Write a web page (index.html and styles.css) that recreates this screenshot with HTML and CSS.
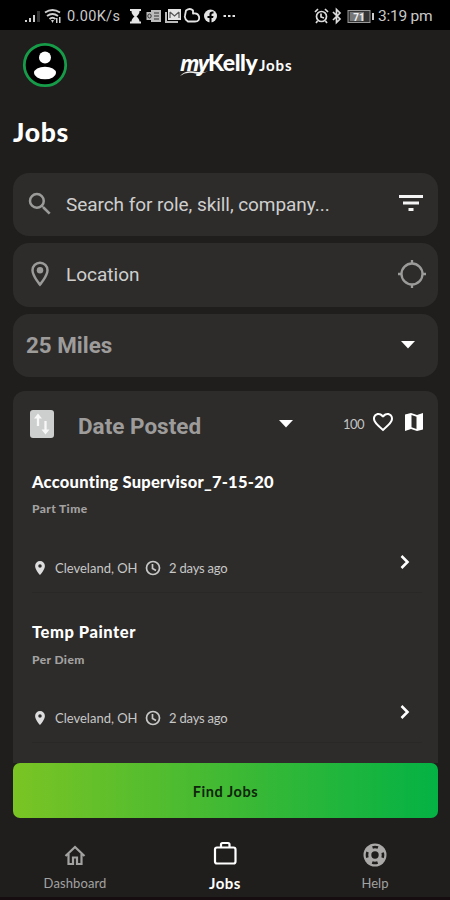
FILE: index.html
```html
<!DOCTYPE html>
<html lang="en">
<head>
<meta charset="utf-8">
<title>myKelly Jobs</title>
<link rel="stylesheet" href="styles.css">
</head>
<body>
<div class="app">
  <div class="status">
    <svg class="signal" width="38" height="18" viewBox="0 0 38 18" fill="#d0d0d0">
      <path d="M0 13h2v2H0zM4 11h2v4H4zM8 8h2v7H8z"/><path d="M12 4h3v11h-3z" fill="#333"/>
      <g fill="none" stroke="#d0d0d0" stroke-width="1.9"><path d="M20 5.500q7.500-5 15 0M22 9q5.500-4 11 0M24.500 12q3-2.500 6 0"/></g>
      <path d="M26 13h3l-1.500 3zM31 11h1.500v5H31zM34 10h1.500v6H34z"/>
    </svg>
    <span class="speed">0.00K/s</span>
    <svg class="notes" width="108" height="18" viewBox="0 0 108 18" fill="#e4e4e4">
      <path d="M0 2h11v2H9.500c0 3-1.500 4-3 5.500 1.500 1.500 3 2.500 3 5H11v2H0v-2h1.500c0-2.500 1.500-3.500 3-5C3 8 1.500 7 1.500 4H0z"/>
      <path d="M21 3h10v12H21zM16.500 5H22v8h-5.500z" fill="#bcbcbc"/><g fill="none" stroke="#333" stroke-width="1"><ellipse cx="19.500" cy="9" rx="1.700" ry="2"/><path d="M24 6h5M24 9h5M24 12h5"/></g>
      <path d="M38 2h13v11H38z"/><path d="M35 5h2v9h11v2H35z" fill="#bbb"/><path d="m40 5 4.500 4L49 5M40 11V5M49 11V5" fill="none" stroke="#555" stroke-width="1.200"/>
      <path d="M56 3.500q4-3 7 0v3q5-1 6 3 1 5-4 5h-7q-4-3-3-6z" fill="none" stroke="#e4e4e4" stroke-width="1.800" stroke-linejoin="round"/>
      <circle cx="80.500" cy="9" r="6.500"/><path d="M79.500 16v-5h-2V9h2V7q0-3 4-2.500v2q-2-.300-2 1V9h2l-.400 2h-1.600v5z" fill="#000"/>
      <path d="M93.500 8h2.500v2h-2.500zM98 8h2.500v2H98zM102.500 8h2.500v2h-2.500z"/>
    </svg>
    <svg class="system" width="61" height="18" viewBox="0 0 61 18">
      <g fill="none" stroke="#dcdcdc" stroke-width="1.700"><circle cx="7.500" cy="9.500" r="5"/><path d="M1 5l3-3M11 2l3 3M7 6.500V10l3 1M3.500 14l-1.500 2M11.500 14l1.500 2"/><path d="m19 5 7 7-3.500 3.500v-13L26 6l-7 7"/></g>
      <rect x="34" y="3.500" width="22" height="12" fill="#333" stroke="#999"/><path d="M36 5h14v9H36z" fill="#777"/><path d="M58 6h2v7h-2z" fill="#ccc"/>
      <text class="battery" x="45" y="13.500" text-anchor="middle">71</text>
    </svg>
    <span class="time">3:19 pm</span>
  </div>

  <header class="header">
    <svg class="avatar" width="46" height="46" viewBox="0 0 46 46"><circle cx="23" cy="23" r="20.700" fill="#000" stroke="#169b48" stroke-width="2.800"/><circle cx="23" cy="15.500" r="6" fill="#fff"/><ellipse cx="23" cy="31" rx="11" ry="6.300" fill="#fff"/></svg>
    <div class="brand"><span class="my">my</span><span class="kelly">Kelly</span><span class="sub">Jobs</span>
      <svg class="swoosh" width="28" height="9" viewBox="0 0 28 9"><path d="M0 8Q5 2 14 3.500T28 3.500Q20 6.500 13 5T0 8z" fill="#eee"/></svg>
    </div>
  </header>

  <h1 class="title">Jobs</h1>

  <div class="fields">
    <div class="field">
      <svg class="lead" width="30" height="30" viewBox="0 0 24 24" fill="#9b9b9a"><path d="M15.500 14h-.790l-.280-.270A6.470 6.470 0 0 0 16 9.500 6.500 6.500 0 1 0 9.500 16c1.610 0 3.090-.590 4.230-1.570l.270.280v.790l5 4.990L20.490 19zm-6 0a4.500 4.500 0 1 1 0-9 4.500 4.500 0 0 1 0 9z"/></svg>
      <span class="search-text">Search for role, skill, company...</span>
      <svg class="filter" width="24" height="18" viewBox="0 0 24 18" fill="#f4f4f4"><path d="M0 1h24v3H0zM4 7.500h16v3H4zM9.500 14h5v3h-5z"/></svg>
    </div>
    <div class="field">
      <svg class="lead" width="30" height="30" viewBox="0 0 24 24" fill="#9b9b9a"><path fill-rule="evenodd" d="M12 2a7 7 0 0 0-7 7c0 5.250 7 13 7 13s7-7.750 7-13a7 7 0 0 0-7-7zm0 2a5 5 0 0 1 5 5c0 2.880-2.880 7.190-5 9.880C9.920 16.210 7 11.850 7 9a5 5 0 0 1 5-5z"/><circle cx="12" cy="9" r="2.600"/></svg>
      <span class="location-text">Location</span>
      <svg class="target" width="28" height="28" viewBox="0 0 28 28" fill="none" stroke="#9b9b9a" stroke-width="2.300"><circle cx="14" cy="14" r="10.500"/><path d="M14 0v4M14 24v4M0 14h4M24 14h4"/></svg>
    </div>
    <div class="field select">
      <span class="select-text">25 Miles</span>
      <svg class="caret" width="14" height="8" viewBox="0 0 14 8"><path d="M0 0h14L7 7.500z" fill="#fff"/></svg>
    </div>
  </div>

  <main class="results">
    <div class="toolbar">
      <svg class="sort" width="24" height="28" viewBox="0 0 24 28"><rect width="24" height="28" rx="3" fill="#cdcfce"/><path d="M8 6v10M15.500 11v10" fill="none" stroke="#f8f8f8" stroke-width="2.300"/><path d="M4 8.500 8 3.500l4 5zM11.500 19.500l4 5 4-5z" fill="#f8f8f8"/></svg>
      <span class="sort-text">Date Posted</span>
      <svg class="sort-caret" width="14" height="8" viewBox="0 0 14 8"><path d="M0 0h14L7 7.500z" fill="#fff"/></svg>
      <span class="count">100</span>
      <svg class="heart" width="24" height="24" viewBox="0 0 24 24" fill="#fff"><path d="M16.500 3c-1.740 0-3.410.810-4.500 2.090C10.910 3.810 9.240 3 7.500 3 4.420 3 2 5.420 2 8.500c0 3.780 3.400 6.860 8.550 11.540L12 21.350l1.450-1.320C18.600 15.360 22 12.280 22 8.500 22 5.420 19.580 3 16.500 3zm-4.400 15.550-.100.100-.100-.100C7.140 14.240 4 11.390 4 8.500 4 6.500 5.500 5 7.500 5c1.540 0 3.040.990 3.570 2.360h1.870C13.460 5.990 14.960 5 16.500 5c2 0 3.500 1.500 3.500 3.500 0 2.890-3.140 5.740-7.900 10.050z"/></svg>
      <svg class="map" width="24" height="24" viewBox="0 0 24 24"><path d="M3 4.500 9 3l6 2 6-2v16.500L15 21l-6-2-6 2z" fill="#fff"/><path d="m9.500 5 5 1.700V19l-5-1.700z" fill="#2d2c2b"/></svg>
    </div>

    <article class="job">
      <h2 class="job-title job-one">Accounting Supervisor_7-15-20</h2>
      <p class="type">Part Time</p>
      <div class="meta">
        <svg class="pin" width="10" height="14" viewBox="0 0 14 20"><path fill-rule="evenodd" d="M7 0a7 7 0 0 0-7 7c0 5.250 7 13 7 13s7-7.750 7-13a7 7 0 0 0-7-7zm0 9.500a2.500 2.500 0 1 1 0-5 2.500 2.500 0 0 1 0 5z" fill="#ddd"/></svg>
        <span class="place">Cleveland, OH</span>
        <svg class="clock" width="16" height="16" viewBox="0 0 16 16" fill="none" stroke="#c8c8c8" stroke-width="1.700"><circle cx="8" cy="8" r="6.500"/><path d="M7.500 4v4.500l3.500 2"/></svg>
        <span class="ago">2 days ago</span>
        <svg class="go" width="10" height="16" viewBox="0 0 10 16"><path d="m1.500 2 6 6-6 6" fill="none" stroke="#fff" stroke-width="2.600"/></svg>
      </div>
    </article>
    <article class="job">
      <h2 class="job-title job-two">Temp Painter</h2>
      <p class="type">Per Diem</p>
      <div class="meta">
        <svg class="pin" width="10" height="14" viewBox="0 0 14 20"><path fill-rule="evenodd" d="M7 0a7 7 0 0 0-7 7c0 5.250 7 13 7 13s7-7.750 7-13a7 7 0 0 0-7-7zm0 9.500a2.500 2.500 0 1 1 0-5 2.500 2.500 0 0 1 0 5z" fill="#ddd"/></svg>
        <span class="place">Cleveland, OH</span>
        <svg class="clock" width="16" height="16" viewBox="0 0 16 16" fill="none" stroke="#c8c8c8" stroke-width="1.700"><circle cx="8" cy="8" r="6.500"/><path d="M7.500 4v4.500l3.500 2"/></svg>
        <span class="ago">2 days ago</span>
        <svg class="go" width="10" height="16" viewBox="0 0 10 16"><path d="m1.500 2 6 6-6 6" fill="none" stroke="#fff" stroke-width="2.600"/></svg>
      </div>
    </article>
  </main>

  <button class="find"><span>Find Jobs</span></button>

  <nav class="tabs">
    <div class="tab">
      <svg width="28" height="28" viewBox="0 0 28 28" fill="none" stroke="#a2a2a1" stroke-width="2.200"><path d="m4.500 15 9.500-9 9.500 9M7.500 13v10H12v-6.500h4V23h4.500V13"/></svg>
      <span class="dash">Dashboard</span>
    </div>
    <div class="tab active">
      <svg width="28" height="28" viewBox="0 0 28 28" fill="none" stroke="#fff" stroke-width="2.200"><rect x="4" y="6.500" width="20.500" height="16" rx="2"/><path d="M10 6V3.500Q10 2 11.500 2h5.500q1.500 0 1.500 1.500V6"/></svg>
      <span class="jobs">Jobs</span>
    </div>
    <div class="tab">
      <svg width="28" height="28" viewBox="0 0 28 28"><circle cx="14" cy="14" r="11.500" fill="#aaa9a8"/><g fill="none" stroke="#1f1e1d"><circle cx="14" cy="14" r="8" stroke-width="2.600" stroke-dasharray="5.570 7" stroke-dashoffset="2.780"/></g><circle cx="14" cy="14" r="3.700" fill="#1f1e1d"/></svg>
      <span class="help">Help</span>
    </div>
  </nav>
</div>
</body>
</html>
```
FILE: styles.css
```css
* { box-sizing: border-box; }
body { margin: 0; background: #1f1e1d; color: #fff; font-family: Lato, "Liberation Sans", sans-serif; }
.app { width: 450px; height: 900px; display: flex; flex-direction: column; overflow: hidden; border-bottom: 3px solid #160d11; }
svg { display: block; flex: none; }
span, h1, h2, p { white-space: nowrap; }
h1, h2, p { margin: 0; }

.status { height: 30px; flex: none; background: #000; display: flex; align-items: center; padding: 1px 17px 0 25px; font-family: Roboto, sans-serif; color: #c9c9c9; }
.speed { font-size: 14.500px; margin: 1px 0 0 4px; width: 54px; letter-spacing: .35px; }
.notes { margin-left: 9px; }
.system { margin-left: auto; }
.time { font-size: 15.500px; margin: 1px 0 0 3px; width: 55px; letter-spacing: -.25px; }
.battery { font: 700 10px Roboto, sans-serif; fill: #eee; }

.header { height: 72px; flex: none; display: flex; align-items: flex-start; padding: 12px 0 0 22px; }
.brand { position: relative; display: flex; align-items: baseline; margin: 5px 0 0 112px; line-height: 30px; font-weight: 900; }
.my { font: italic 700 21.500px/30px "Open Sans", sans-serif; width: 28px; letter-spacing: -1.700px; }
.kelly { font-size: 23px; width: 51px; letter-spacing: -.4px; }
.sub { font-size: 15px; letter-spacing: .9px; font-weight: 700; }
.swoosh { position: absolute; left: 0; top: 21px; }

.title { height: 71px; flex: none; padding: 13px 0 0 13px; font-size: 26.500px; line-height: 34px; font-weight: 900; letter-spacing: .7px; }

.fields { flex: none; display: flex; flex-direction: column; gap: 7px; padding: 0 12px 0 13px; font-family: Roboto, sans-serif; }
.field { height: 63.300px; border-radius: 16px; background: #2d2c2b; display: flex; align-items: center; padding: 0 12px; color: #cfcfce; font-size: 19px; }
.field .lead { margin: -2px 11px 0 0; }
.search-text { letter-spacing: -.06px; }
.filter { margin: -3px 3px 0 auto; }
.target { margin: -2px 0 0 auto; }
.select { font-weight: 700; font-size: 22.400px; color: #9d9c9b; }
.select-text { padding-left: 1px; }
.select .caret { margin: -1px 11px 0 auto; }

.results { margin: 14px 12px 0 13px; height: 372px; flex: none; background: #2d2c2b; border-radius: 12px 12px 0 0; padding: 0 12px 0 19px; overflow: hidden; }
.toolbar { height: 71px; display: flex; align-items: center; }
.sort { margin: -5px 0 0 -2px; }
.sort-text { font: 700 22.500px Roboto, sans-serif; color: #9d9c9b; margin-left: 24px; width: 201px; }
.sort-caret { margin-top: -4px; }
.count { margin-left: auto; font-size: 13px; letter-spacing: -.5px; color: #c3c3c2; margin-top: -5px; }
.heart { margin: -8px 0 0 7px; }
.map { margin: -8px 0 0 7px; }

.job { height: 131px; padding-top: 9px; margin: 0 4px 19.500px 0; border-bottom: 1px solid #292826; }
.job-title { font-size: 16.500px; line-height: 22px; font-weight: 900; }
.job-one { letter-spacing: .25px; }
.job-two { letter-spacing: .55px; }
.type { font-size: 12px; line-height: 18px; margin-top: 7.500px; color: #a3a2a1; font-weight: 900; letter-spacing: .4px; }
.meta { display: flex; align-items: center; height: 20px; margin-top: 39.500px; font-size: 13px; color: #c8c8c7; }
.pin { margin-left: 3px; }
.place { margin-left: 10px; width: 90px; }
.ago { margin-left: 8px; letter-spacing: -.2px; }
.go { margin: -12px 12px 0 auto; }

.find { width: 425px; height: 55px; flex: none; margin-left: 13px; border: 0; border-radius: 7px; background: linear-gradient(90deg, #7ac424, #3eb934 52%, #04b244); color: #10250d; font: 700 14.500px Lato, sans-serif; letter-spacing: .55px; padding: 2px 0 0; }
.tabs { flex: none; height: 79px; display: grid; grid-template-columns: repeat(3, 1fr); padding-top: 23px; }
.tab { display: flex; flex-direction: column; align-items: center; font-size: 13px; line-height: 18px; gap: 5px; color: #a2a2a1; }
.dash { letter-spacing: .1px; }
.active { color: #fff; }
.jobs { font-size: 15px; font-weight: 700; letter-spacing: .5px; }
```
